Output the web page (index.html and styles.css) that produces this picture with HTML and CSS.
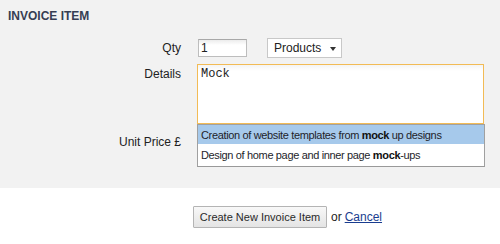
FILE: index.html
```html
<!DOCTYPE html>
<html lang="en">
<head>
    <meta charset="UTF-8">
    <title>Invoice Item</title>
    <link rel="stylesheet" href="styles.css">
</head>
<body>
    <div class="panel">
        <h2 class="title">INVOICE ITEM</h2>
        <div class="row">
            <label class="label">Qty</label>
            <input type="text" class="qty" value="1">
            <div class="select">Products<span class="arrow"></span></div>
        </div>
        <div class="row top">
            <label class="label details">Details</label>
            <div class="field">
                <textarea class="details-box">Mock</textarea>
                <ul class="suggest">
                    <li class="active">Creation of website templates from <b>mock</b> up designs</li>
                    <li>Design of home page and inner page <b>mock</b>-ups</li>
                </ul>
            </div>
        </div>
        <div class="row price-row">
            <label class="label">Unit Price £</label>
            <input type="text" class="price">
        </div>
    </div>
    <div class="actions">
        <button class="button">Create New Invoice Item</button>
        <span class="or">or</span>
        <a href="#" class="cancel">Cancel</a>
    </div>
</body>
</html>
```

FILE: styles.css
```css
body {
    margin: 0px;
    font-family: "Liberation Sans", Arial, sans-serif;
    font-size: 12px;
    color: #222;
    background-color: white;
}

.panel {
    background-color: #f2f2f2;
    padding: 9px 0px 36px 0px;
}

.title {
    margin: 0px 0px 15px 8px;
    font-size: 12px;
    line-height: 14px;
    font-weight: bold;
    color: #363d52;
}

.row {
    display: flex;
    align-items: center;
    margin-bottom: 6px;
}

.row.top {
    align-items: flex-start;
    margin-bottom: 8px;
}

.row.price-row {
    margin-bottom: 0px;
}

.label {
    width: 181px;
    margin-right: 16px;
    text-align: right;
    line-height: 14px;
    color: #222;
}

.label.details {
    padding-top: 3px;
}

.qty {
    box-sizing: border-box;
    width: 49px;
    height: 18px;
    margin: 0px 20px 0px 1px;
    padding: 0px 2px;
    border: 1px solid #bdbdbd;
    border-top-color: #a8a8a8;
    background: linear-gradient(#ececec, #ffffff 5px);
    font-family: "Liberation Sans", Arial, sans-serif;
    font-size: 12px;
    color: #222;
}

.select {
    box-sizing: border-box;
    position: relative;
    width: 75px;
    height: 20px;
    padding: 0px 6px;
    border: 1px solid #c8c8c8;
    background-color: white;
    line-height: 18px;
    color: #222;
}

.arrow {
    position: absolute;
    right: 5px;
    top: 8px;
    border-left: 3px solid transparent;
    border-right: 3px solid transparent;
    border-top: 4px solid #333;
}

.field {
    position: relative;
}

.details-box {
    display: block;
    box-sizing: border-box;
    width: 287px;
    height: 60px;
    margin: 0px;
    padding: 2px 3px;
    border: 1px solid #f2bb55;
    background: linear-gradient(#f4f4f4, #ffffff 6px);
    font-family: "Liberation Mono", "Courier New", monospace;
    font-size: 12px;
    line-height: 14px;
    color: #222;
    resize: none;
    outline: none;
}

.suggest {
    position: absolute;
    top: 60px;
    left: 0px;
    z-index: 2;
    box-sizing: border-box;
    width: 288px;
    margin: 0px;
    padding: 0px;
    list-style: none;
    background-color: white;
    border: 1px solid #a0a0a0;
    border-bottom-color: #999;
    font-size: 11px;
    letter-spacing: -0.35px;
}

.suggest li {
    padding: 3px 3px;
    line-height: 14px;
    color: #1e1e2a;
    white-space: nowrap;
}

.suggest li.active {
    background-color: #a6c9eb;
    padding-bottom: 2px;
}

.suggest li + li {
    padding-top: 4px;
    padding-bottom: 4px;
}

.suggest b {
    color: #111;
}

.price {
    box-sizing: border-box;
    width: 166px;
    height: 20px;
    margin: 0px;
    border: 1px solid #bdbdbd;
    background-color: white;
}

.actions {
    display: flex;
    align-items: center;
    padding: 18px 0px 0px 193px;
}

.button {
    box-sizing: border-box;
    width: 134px;
    height: 22px;
    padding: 0px;
    margin: 0px 4px 0px 0px;
    border: 1px solid #b4b4b4;
    border-radius: 1px;
    background: linear-gradient(#f8f8f8, #e4e4e4);
    font-family: "Liberation Sans", Arial, sans-serif;
    font-size: 11px;
    color: #2a2a2a;
}

.or {
    margin-right: 3px;
    color: #222;
}

.cancel {
    color: #1a3d8f;
}
```
